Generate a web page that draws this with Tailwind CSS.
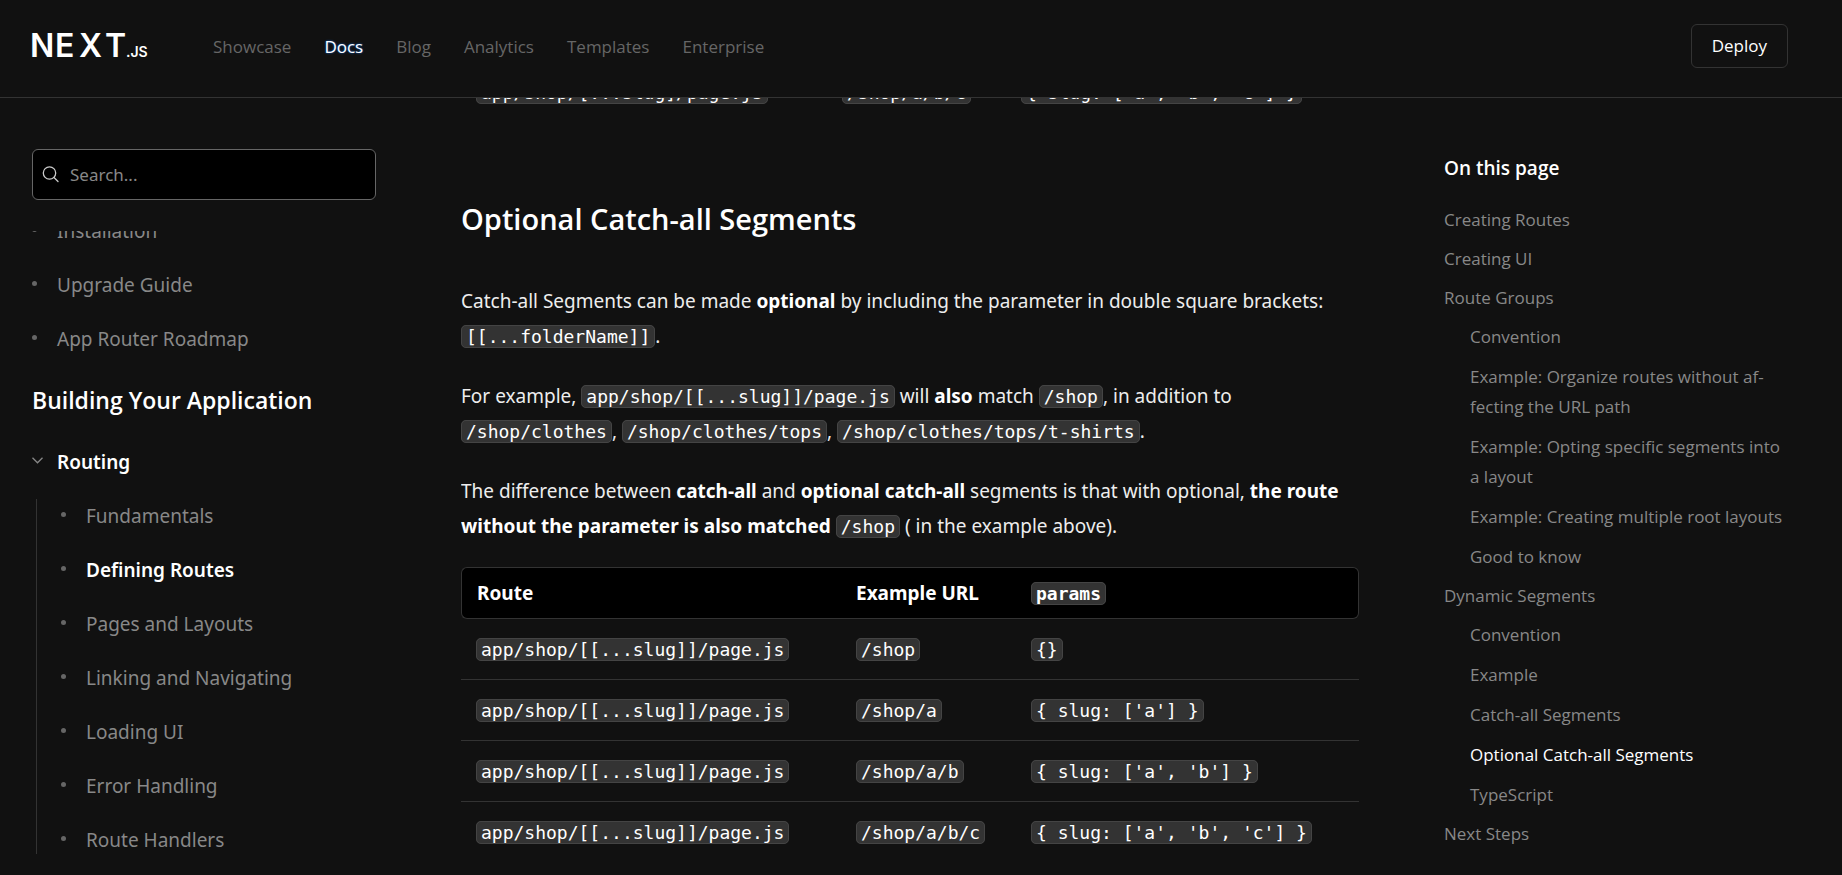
<!DOCTYPE html>
<html lang="en">
<head>
<meta charset="utf-8">
<title>Routing: Defining Routes | Next.js</title>
<script src="https://cdn.jsdelivr.net/npm/@tailwindcss/browser@4"></script>
</head>
<body class="flex h-screen flex-col overflow-hidden bg-[#111] font-['Noto_Sans','Open_Sans',sans-serif] text-[19px] text-[#ededed]">

<header class="flex shrink-0 items-center border-b border-[#333] pt-6 pr-[54px] pb-[29px] pl-8 font-['Open_Sans',sans-serif]">
  <a href="#" aria-label="Next.js" class="mr-[66px] block">
    <svg class="overflow-visible" width="115" height="24" viewBox="0 0 115 24" fill="#fff" font-family="Inter, sans-serif" font-size="32" font-weight="600">
      <text x="-2" y="23">N</text>
      <text x="23" y="23">E</text>
      <text x="47" y="23">X</text>
      <text x="73" y="23">T</text>
      <text x="94" y="23" font-size="14">.JS</text>
    </svg>
  </a>
  <nav class="flex gap-[33px] pt-0.5 text-[17px] leading-[24px] text-[#666]">
    <a href="#">Showcase</a>
    <a href="#" class="text-white [text-shadow:0_0_2px_#0070f3]">Docs</a>
    <a href="#">Blog</a>
    <a href="#">Analytics</a>
    <a href="#">Templates</a>
    <a href="#">Enterprise</a>
  </nav>
  <button type="button" class="ml-auto rounded-md border border-[#333] px-5 py-2 text-[17px] leading-[26px] text-white">Deploy</button>
</header>

<div class="grid min-h-0 flex-1 grid-cols-[344px_minmax(0,1fr)_344px] gap-[85px] pr-[54px] pl-8">

  <aside class="flex min-h-0 flex-col pt-[51px]">
    <label class="flex h-[51px] shrink-0 items-center gap-[11px] rounded-md border border-[#666] bg-black px-[9px]">
      <svg class="shrink-0" width="17" height="17" viewBox="0 0 17 17" fill="none" stroke="#ccc" stroke-width="1.3" stroke-linecap="round"><circle cx="7.5" cy="7" r="6.2"/><path d="M12 11.5L16 15.5"/></svg>
      <span class="sr-only">Search</span>
      <input type="text" placeholder="Search..." class="w-full bg-transparent text-[17px] leading-[30px] text-white outline-none placeholder:text-[#888]">
    </label>

    <nav class="mt-[31px] min-h-0 flex-1 overflow-hidden text-[#888]">
      <ul class="-mt-[27px] leading-[54px]">
        <li class="flex items-center gap-5"><i class="mb-1 size-[5px] rounded-full bg-[#666]"></i><a href="#">Installation</a></li>
        <li class="flex items-center gap-5"><i class="mb-1 size-[5px] rounded-full bg-[#666]"></i><a href="#">Upgrade Guide</a></li>
        <li class="flex items-center gap-5"><i class="mb-1 size-[5px] rounded-full bg-[#666]"></i><a href="#">App Router Roadmap</a></li>
      </ul>
      <h2 class="font-['Open_Sans',sans-serif] text-[23px] leading-[68px] font-semibold text-white">Building Your Application</h2>
      <button type="button" class="flex items-center gap-[14px] leading-[56px] font-semibold text-white">
        <svg class="mb-1" width="11" height="7" viewBox="0 0 11 7" fill="none" stroke="#888" stroke-width="1.3"><path d="M.5.8L5.5 5.8L10.5.8"/></svg>
        Routing
      </button>
      <ul class="mt-[9px] ml-1 border-l border-[#333] pt-[3px] leading-[28px]">
        <li class="flex items-center gap-5 pb-[26px] pl-6"><i class="mb-1 size-[5px] rounded-full bg-[#666]"></i><a href="#">Fundamentals</a></li>
        <li class="flex items-center gap-5 pb-[26px] pl-6"><i class="mb-1 size-[5px] rounded-full bg-[#666]"></i><a href="#" class="font-semibold text-white">Defining Routes</a></li>
        <li class="flex items-center gap-5 pb-[26px] pl-6"><i class="mb-1 size-[5px] rounded-full bg-[#666]"></i><a href="#">Pages and Layouts</a></li>
        <li class="flex items-center gap-5 pb-[26px] pl-6"><i class="mb-1 size-[5px] rounded-full bg-[#666]"></i><a href="#">Linking and Navigating</a></li>
        <li class="flex items-center gap-5 pb-[26px] pl-6"><i class="mb-1 size-[5px] rounded-full bg-[#666]"></i><a href="#">Loading UI</a></li>
        <li class="flex items-center gap-5 pb-[26px] pl-6"><i class="mb-1 size-[5px] rounded-full bg-[#666]"></i><a href="#">Error Handling</a></li>
        <li class="flex items-center gap-5 pl-6"><i class="mb-1 size-[5px] rounded-full bg-[#666]"></i><a href="#">Route Handlers</a></li>
      </ul>
    </nav>
  </aside>

  <main class="min-h-0 overflow-hidden [&_code]:rounded-[5px] [&_code]:border [&_code]:border-[#444] [&_code]:bg-[#333] [&_code]:px-1 [&_code]:font-['DejaVu_Sans_Mono',monospace] [&_code]:text-[18px] [&_code]:whitespace-pre [&_code]:text-white [&_strong]:font-bold [&_strong]:text-white">
    <table class="-mt-9 w-full table-fixed text-left">
      <colgroup><col class="w-[366px]"><col class="w-[179px]"><col></colgroup>
      <tbody>
        <tr class="h-[61px]">
          <td class="px-[15px]"><code>app/shop/[...slug]/page.js</code></td>
          <td class="px-[15px]"><code>/shop/a/b/c</code></td>
          <td class="px-[15px]"><code>{ slug: ['a', 'b', 'c'] }</code></td>
        </tr>
      </tbody>
    </table>

    <h2 class="mt-[76px] font-['Open_Sans',sans-serif] text-[29px] leading-[40px] font-semibold text-white">Optional Catch-all Segments</h2>

    <div class="mt-[45px] flex flex-col gap-[25px] leading-[35px]">
      <p>Catch-all Segments can be made <strong>optional</strong> by including the parameter in double square brackets: <code>[[...folderName]]</code>.</p>
      <p>For example, <code>app/shop/[[...slug]]/page.js</code> will <strong>also</strong> match <code>/shop</code>, in addition to <br><code>/shop/clothes</code>, <code>/shop/clothes/tops</code>, <code>/shop/clothes/tops/t-shirts</code>.</p>
      <p>The difference between <strong>catch-all</strong> and <strong>optional catch-all</strong> segments is that with optional, <strong>the route <br>without the parameter is also matched</strong> <code>/shop</code> ( in the example above).</p>
    </div>

    <table class="mt-[23px] w-full table-fixed border-separate border-spacing-0 text-left">
      <colgroup><col class="w-[380px]"><col class="w-[175px]"><col></colgroup>
      <thead class="text-white">
        <tr class="h-[52px]">
          <th class="rounded-l-md border border-r-0 border-[#333] bg-black px-[15px] font-bold">Route</th>
          <th class="border-y border-[#333] bg-black px-[15px] font-bold">Example URL</th>
          <th class="rounded-r-md border border-l-0 border-[#333] bg-black px-[15px] font-bold"><code>params</code></th>
        </tr>
      </thead>
      <tbody class="[&_td]:border-b [&_td]:border-[#333] [&_td]:px-[15px] [&_tr:last-child_td]:border-b-0">
        <tr class="h-[61px]"><td><code>app/shop/[[...slug]]/page.js</code></td><td><code>/shop</code></td><td><code>{}</code></td></tr>
        <tr class="h-[61px]"><td><code>app/shop/[[...slug]]/page.js</code></td><td><code>/shop/a</code></td><td><code>{ slug: ['a'] }</code></td></tr>
        <tr class="h-[61px]"><td><code>app/shop/[[...slug]]/page.js</code></td><td><code>/shop/a/b</code></td><td><code>{ slug: ['a', 'b'] }</code></td></tr>
        <tr class="h-[61px]"><td><code>app/shop/[[...slug]]/page.js</code></td><td><code>/shop/a/b/c</code></td><td><code>{ slug: ['a', 'b', 'c'] }</code></td></tr>
      </tbody>
    </table>
  </main>

  <aside class="min-h-0 overflow-hidden pt-[53px] font-['Open_Sans',sans-serif]">
    <h2 class="leading-[34px] font-semibold text-white">On this page</h2>
    <ul class="mt-5 flex flex-col gap-[9px] text-[17px] leading-[30px] text-[#888]">
      <li><a href="#">Creating Routes</a></li>
      <li><a href="#">Creating UI</a></li>
      <li><a href="#">Route Groups</a>
        <ul class="mt-[9px] flex flex-col gap-[10px] pl-[26px]">
          <li><a href="#">Convention</a></li>
          <li><a href="#">Example: Organize routes without af&shy;fecting the URL path</a></li>
          <li><a href="#">Example: Opting specific segments into a layout</a></li>
          <li><a href="#">Example: Creating multiple root layouts</a></li>
          <li><a href="#">Good to know</a></li>
        </ul>
      </li>
      <li><a href="#">Dynamic Segments</a>
        <ul class="mt-[9px] flex flex-col gap-[10px] pl-[26px]">
          <li><a href="#">Convention</a></li>
          <li><a href="#">Example</a></li>
          <li><a href="#">Catch-all Segments</a></li>
          <li><a href="#" class="text-white">Optional Catch-all Segments</a></li>
          <li><a href="#">TypeScript</a></li>
        </ul>
      </li>
      <li><a href="#">Next Steps</a></li>
    </ul>
  </aside>
</div>
</body>
</html>
